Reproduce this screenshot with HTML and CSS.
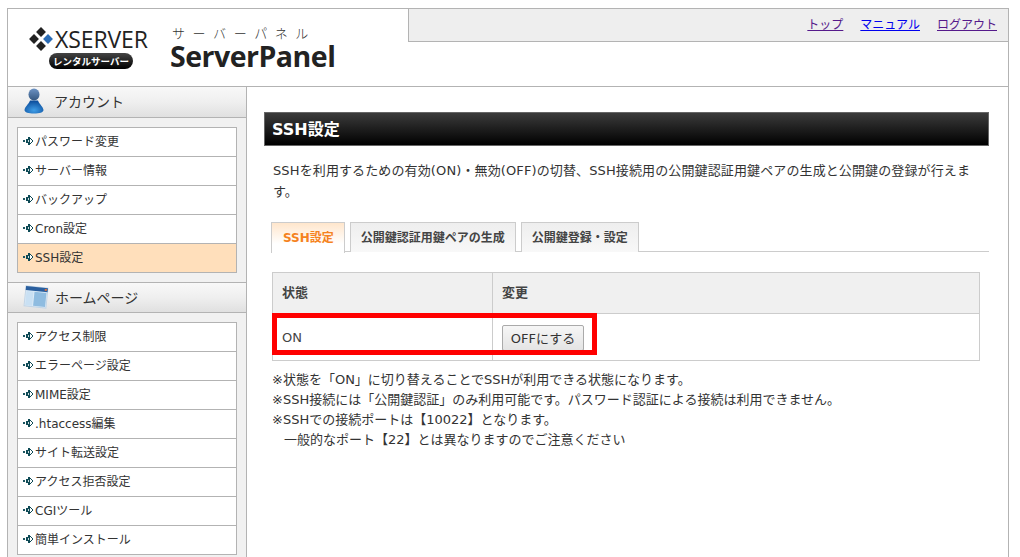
FILE: index.html
```html
<!DOCTYPE html>
<html lang="ja">
<head>
<meta charset="utf-8">
<title>SSH設定</title>
<link rel="stylesheet" href="styles.css">
</head>
<body>
<svg class="defs" width="0" height="0"><defs><g id="arrow"><rect x="0" y="4" width="2" height="2" fill="#1b5560"/><path d="M3 3h2V1h2v1h1v1h1v1h1v2H9v1H8v1H7v1H5V7H3z" fill="#0e4a55"/><path d="M5 4h1v2H5z" fill="#cfe0e2"/><path d="M7 3h1v1h1v2H8v1H7z" fill="#fff"/></g></defs></svg>
<div class="wrap">
  <header class="header">
    <div class="logo-block">
      <div class="xserver">
        <div class="xs-top">
          <svg class="xs-mark" width="24" height="24" viewBox="0 0 24 24"><rect x="8.500" y="1.500" width="7" height="7" transform="rotate(45 12 5)" fill="#222"/><rect x="1.500" y="8.500" width="7" height="7" transform="rotate(45 5 12)" fill="#222"/><rect x="15.500" y="8.500" width="7" height="7" transform="rotate(45 19 12)" fill="#2b6cb5"/><rect x="8.500" y="15.500" width="7" height="7" transform="rotate(45 12 19)" fill="#222"/></svg>
          <span class="xs-name">XSERVER</span>
        </div>
        <div class="xs-badge">レンタルサーバー</div>
      </div>
      <div class="panel-title">
        <div class="panel-kana">サーバーパネル</div>
        <div class="panel-name">ServerPanel</div>
      </div>
    </div>
    <nav class="topnav">
      <a class="visited" href="#">トップ</a>
      <a class="fresh" href="#">マニュアル</a>
      <a class="visited" href="#">ログアウト</a>
    </nav>
  </header>
  <div class="body">
    <aside class="side">
      <div class="side-head">
        <svg class="ico-user" width="22" height="26" viewBox="0 0 22 26"><defs><linearGradient id="ub" x1="0" y1="0" x2="0" y2="1"><stop offset="0" stop-color="#6d93c4"/><stop offset="1" stop-color="#35577f"/></linearGradient><radialGradient id="bb" cx=".5" cy=".75" r=".7"><stop offset="0" stop-color="#3f9de6"/><stop offset="1" stop-color="#0d4f9e"/></radialGradient></defs><ellipse cx="11" cy="6.500" rx="5.500" ry="6" fill="url(#ub)"/><path d="M7 12.500c-1.500 4-5 6-5.500 9.500 0 2.500 4 3.500 9.500 3.500s9.500-1 9.500-3.500c-.5-3.500-4-5.500-5.500-9.500z" fill="url(#bb)"/></svg>
        <span>アカウント</span>
      </div>
      <ul class="menu">
        <li><svg class="arrows" width="12" height="10"><use href="#arrow"/></svg>パスワード変更</li>
        <li><svg class="arrows" width="12" height="10"><use href="#arrow"/></svg>サーバー情報</li>
        <li><svg class="arrows" width="12" height="10"><use href="#arrow"/></svg>バックアップ</li>
        <li><svg class="arrows" width="12" height="10"><use href="#arrow"/></svg>Cron設定</li>
        <li class="current"><svg class="arrows" width="12" height="10"><use href="#arrow"/></svg>SSH設定</li>
      </ul>
      <div class="side-head">
        <svg class="ico-win" width="26" height="26" viewBox="0 0 26 26"><g transform="rotate(6 13 13)"><rect x="2" y="3" width="22" height="20" fill="#dcebf7" stroke="#c3d5e6"/><rect x="2" y="3" width="22" height="4" fill="#2a5f9e"/><rect x="11" y="8" width="12" height="14" fill="#8fbce0"/><rect x="3" y="8" width="7" height="14" fill="#c9e0f3"/><rect x="21" y="4" width="2" height="2" fill="#e2703a"/></g></svg>
        <span>ホームページ</span>
      </div>
      <ul class="menu">
        <li><svg class="arrows" width="12" height="10"><use href="#arrow"/></svg>アクセス制限</li>
        <li><svg class="arrows" width="12" height="10"><use href="#arrow"/></svg>エラーページ設定</li>
        <li><svg class="arrows" width="12" height="10"><use href="#arrow"/></svg>MIME設定</li>
        <li><svg class="arrows" width="12" height="10"><use href="#arrow"/></svg>.htaccess編集</li>
        <li><svg class="arrows" width="12" height="10"><use href="#arrow"/></svg>サイト転送設定</li>
        <li><svg class="arrows" width="12" height="10"><use href="#arrow"/></svg>アクセス拒否設定</li>
        <li><svg class="arrows" width="12" height="10"><use href="#arrow"/></svg>CGIツール</li>
        <li><svg class="arrows" width="12" height="10"><use href="#arrow"/></svg>簡単インストール</li>
      </ul>
    </aside>
    <main class="main">
      <h1 class="title">SSH設定</h1>
      <p class="lead">SSHを利用するための有効(ON)・無効(OFF)の切替、SSH接続用の公開鍵認証用鍵ペアの生成と公開鍵の登録が行えます。</p>
      <div class="tabs">
        <div class="tab active">SSH設定</div>
        <div class="tab">公開鍵認証用鍵ペアの生成</div>
        <div class="tab">公開鍵登録・設定</div>
      </div>
      <div class="table-wrap">
        <table class="state">
          <tr><th class="c1">状態</th><th>変更</th></tr>
          <tr><td class="c1">ON</td><td><button class="btn" type="button">OFFにする</button></td></tr>
        </table>
        <div class="highlight"></div>
      </div>
      <div class="notes">
        <p>※状態を「ON」に切り替えることでSSHが利用できる状態になります。</p>
        <p>※SSH接続には「公開鍵認証」のみ利用可能です。パスワード認証による接続は利用できません。</p>
        <p>※SSHでの接続ポートは【10022】となります。</p>
        <p class="indent">一般的なポート【22】とは異なりますのでご注意ください</p>
      </div>
    </main>
  </div>
</div>
</body>
</html>
```
FILE: styles.css
```css
* { box-sizing: border-box; }
html, body { height: 100%; }
body {
  margin: 0;
  padding: 8px 11px 0 7px;
  background: #fff;
  color: #333;
  font-family: "DejaVu Sans", "Noto Sans CJK JP", sans-serif;
  font-size: 12px;
  overflow: hidden;
}
.defs { position: absolute; }
.wrap { border: 1px solid #b3b3b3; border-bottom: 0; height: 700px; }
.header {
  height: 78px;
  border-bottom: 1px solid #b3b3b3;
  display: flex;
  justify-content: space-between;
  align-items: flex-start;
}
.logo-block { display: flex; padding: 16px 0 0 21px; gap: 21px; }
.xserver { width: 120px; }
.xs-top { display: flex; align-items: center; gap: 2px; height: 24px; margin-top: 2px; }
.xs-mark { flex: none; }
.xs-name { font-family: "Open Sans", sans-serif; font-size: 23px; line-height: 24px; font-weight: 500; color: #222; letter-spacing: -.1px; }
.xs-badge {
  margin: 2px 0 0 20px;
  width: 84px; height: 16px;
  border-radius: 8px;
  background: linear-gradient(#444, #000);
  color: #fff;
  font: 700 9.500px/16px "Noto Sans CJK JP", sans-serif;
  text-align: center;
  white-space: nowrap;
}
.panel-title { display: flex; flex-direction: column; }
.panel-kana { font: 300 13px/16px "Noto Sans CJK JP", sans-serif; letter-spacing: 7.600px; color: #333; margin-left: 2px; white-space: nowrap; }
.panel-name { font: 700 28.500px/30px "Open Sans", sans-serif; color: #222; letter-spacing: -.5px; }
.topnav {
  width: 600px;
  height: 33px;
  background: #eee;
  border-left: 1px solid #b3b3b3;
  border-bottom: 1px solid #b3b3b3;
  display: flex;
  justify-content: flex-end;
  align-items: center;
  gap: 17px;
  padding: 0 11px 3px 0;
  font-family: "Noto Sans CJK JP", sans-serif;
  font-size: 12px;
}
.visited { color: #551a8b; }
.fresh { color: #0000ee; }
.body { display: flex; height: 620px; }
.side { width: 239px; background: #f1f1f1; border-right: 1px solid #b3b3b3; flex: none; }
.side-head {
  height: 31px;
  border-bottom: 1px solid #b3b3b3;
  background: linear-gradient(#f8f8f8, #efefef 50%, #e0e0e0);
  display: flex;
  align-items: center;
  padding: 0 0 2px 15px;
  font-family: "Noto Sans CJK JP", sans-serif;
  font-size: 14px;
  color: #333;
}
.side-head span { margin-left: 9px; }
.ico-win { margin-right: -3px; }
.side-head + .menu { margin: 9px; }
.menu + .side-head { border-top: 1px solid #b3b3b3; }
.menu { list-style: none; padding: 0; border: 1px solid #b3b3b3; border-bottom: 0; background: #fff; }
.menu li {
  height: 29px;
  border-bottom: 1px solid #b3b3b3;
  display: flex;
  align-items: center;
  padding: 0 0 3px 5px;
  color: #333;
  white-space: nowrap;
}
.menu li.current { background: #ffdfbb; }
.arrows { flex: none; }
.main { flex: 1; padding: 25px 19px 0 17px; min-width: 0; }
.title {
  margin: 0;
  height: 34px;
  border: 1px solid #666;
  background: linear-gradient(#3b3b3b, #000);
  color: #fff;
  font-size: 16px;
  font-weight: 700;
  line-height: 33px;
  padding-left: 7px;
}
.lead { margin: 14px 6px 0 9px; line-height: 21px; font-size: 13px; letter-spacing: .12px; }
.tabs {
  margin: 20px 0 0 7px;
  height: 30px;
  border-bottom: 1px solid #ccc;
  display: flex;
  gap: 5px;
}
.tab {
  height: 30px;
  border: 1px solid #ccc;
  border-bottom: 0;
  background: linear-gradient(#eee, #f8f8f8);
  padding: 0 10px;
  font-weight: 700;
  font-size: 12px;
  line-height: 31px;
  color: #444;
  white-space: nowrap;
}
.tab.active { background: linear-gradient(#ffe6cc, #fff 70%); color: #f58220; height: 31px; padding-left: 11px; }
.table-wrap { position: relative; margin: 20px 9px 0 8px; }
.state { width: 100%; border-collapse: collapse; table-layout: fixed; }
.state th, .state td { border: 1px solid #ccc; text-align: left; padding: 0 9px; font-size: 13px; color: #444; }
.state th { height: 41px; background: #f0f0f0; font-weight: 700; padding-bottom: 4px; }
.state td { height: 47px; padding-top: 1px; }
.state .c1 { width: 220px; }
.btn {
  height: 26px;
  width: 82px;
  padding: 0;
  border: 1px solid #aaa;
  border-radius: 2px;
  background: linear-gradient(#f6f6f6, #e4e4e4);
  color: #333;
  font: 13px "DejaVu Sans", "Noto Sans CJK JP", sans-serif;
}
.highlight {
  position: absolute;
  left: 0;
  top: 41px;
  width: 325px;
  height: 42px;
  border: 5px solid #f00;
}
.notes { margin: 9px 0 0 8px; line-height: 20px; font-size: 13px; }
.notes p { margin: 0; }
.notes .indent { padding-left: 12px; }
```
